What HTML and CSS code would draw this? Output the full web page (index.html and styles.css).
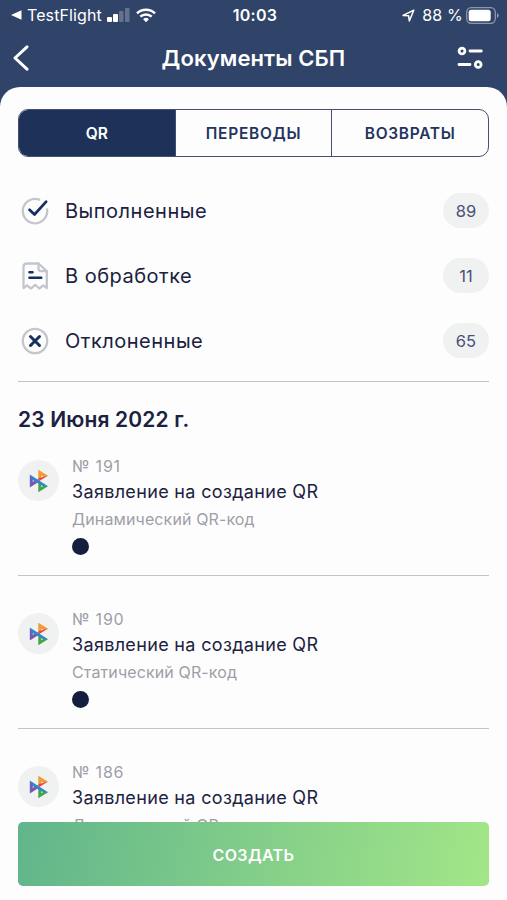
FILE: index.html
```html
<!DOCTYPE html>
<html lang="ru">
<head>
    <meta charset="UTF-8">
    <meta name="viewport" content="width=device-width, initial-scale=1.0">
    <title>Документы СБП</title>
    <link rel="stylesheet" href="styles.css">
</head>
<body>
    <!-- Logo shared by all list items -->
    <svg width="0" height="0" class="defs">
        <symbol id="sbp" viewBox="0 0 20 24">
            <path d="M9.300 .8L19 6.700l-4 1.500-2.700-1.800v5.100l-3-2z" fill="#f29a33"/>
            <path d="M19 6.700L9.300 12.400V9.200z" fill="#e2474c"/>
            <path d="M9.300 12.500v10.700L19 17.300l-4-.8-2.700 1.700v-4z" fill="#43a548"/>
            <path d="M.8 5.600v12.600l3-1.800V9.200z" fill="#6c5cbb"/>
            <path d="M.8 18.200L11 12.200 8.300 10.300 3.500 13z" fill="#7d55a8"/>
            <path d="M.8 5.600L19 17.300h-4.800L3.300 10.700z" fill="#2f86c8"/>
        </symbol>
    </svg>

    <header>
        <div class="status">
            <div class="status-left">
                <svg width="11" height="10" viewBox="0 0 11 10"><path d="M0 5L10.500 0.300v9.400z" fill="#fff"/></svg>
                <span class="carrier">TestFlight</span>
                <svg class="signal" width="23" height="14" viewBox="0 0 23 14" fill="#fff">
                    <rect x="0" y="9" width="5" height="5" rx="1"/>
                    <rect x="6" y="6" width="5" height="8" rx="1"/>
                    <rect x="12" y="3" width="4.500" height="11" rx="1" opacity=".25"/>
                    <rect x="18" y="0" width="4.500" height="14" rx="1" opacity=".25"/>
                </svg>
                <svg class="wifi" width="20" height="15" viewBox="0 0 20 15" fill="none" stroke="#fff" stroke-width="2.500">
                    <path d="M1 5.300a13 13 0 0 1 18 0"/>
                    <path d="M4.300 8.700a8.200 8.200 0 0 1 11.400 0"/>
                    <path d="M7.100 11.200a4.200 4.200 0 0 1 5.800 0L10 14.300z" fill="#fff" stroke="none"/>
                </svg>
            </div>
            <div class="time">10:03</div>
            <div class="status-right">
                <svg width="13" height="13" viewBox="0 0 13 13" fill="none" stroke="#fff" stroke-width="1.500" stroke-linejoin="round"><path d="M1 6.400L11.800 1.200L7.300 12L6.600 6.700z"/></svg>
                <span class="percent">88 %</span>
                <svg width="33" height="17" viewBox="0 0 33 17">
                    <rect x=".7" y=".7" width="28.600" height="15.600" rx="4.500" fill="none" stroke="#fff" stroke-opacity=".45" stroke-width="1.300"/>
                    <rect x="2.700" y="2.700" width="22" height="11.600" rx="2.500" fill="#fff"/>
                    <path d="M31 6v5q1.600-.8 1.600-2.500T31 6z" fill="#fff" fill-opacity=".5"/>
                </svg>
            </div>
        </div>
        <div class="nav">
            <svg width="16" height="26" viewBox="0 0 16 26" fill="none" stroke="#fff" stroke-width="3" stroke-linecap="round" stroke-linejoin="round"><path d="M14 1.800L2 13l12 11.200"/></svg>
            <h1>Документы СБП</h1>
            <svg class="settings" width="26" height="24" viewBox="0 0 26 24" fill="none" stroke="#fff" stroke-width="2.800" stroke-linecap="round">
                <circle cx="5" cy="5" r="2.900"/>
                <path d="M13 5h11.300M2 18.500h11"/>
                <circle cx="21.200" cy="18.500" r="2.900"/>
            </svg>
        </div>
    </header>

    <main>
        <div class="tabs">
            <button class="active">QR</button>
            <button>ПЕРЕВОДЫ</button>
            <button>ВОЗВРАТЫ</button>
        </div>

        <ul class="filters">
            <li>
                <svg width="28" height="28" viewBox="0 0 28 28" fill="none" stroke-width="2.300" stroke-linecap="round">
                    <path d="M18.200 2.700A12.200 12.200 0 1 0 26.100 12.500" stroke="#c3c7cc"/>
                    <path d="M8.500 12.800l5 4.700L25.200 4.700" stroke="#142f60" stroke-width="2.700" stroke-linejoin="round"/>
                </svg>
                <span>Выполненные</span>
                <b>89</b>
            </li>
            <li>
                <svg width="28" height="28" viewBox="0 0 28 28" fill="none" stroke-width="2.300" stroke-linecap="round" stroke-linejoin="round">
                    <path d="M17.500 1.500H6Q2.500 1.500 2.500 5v21l3.600-2.600L10 26.500l4.200-3.600 4.200 3.600 3.800-3.100 3.600 2.600V9.200z" stroke="#c3c7cc"/>
                    <path d="M17.500 1.500v4.700q0 3 3 3h5.300" stroke="#c3c7cc"/>
                    <path d="M8.500 10.200h3M8.500 15.700h11.700" stroke="#142f60" stroke-width="2.600"/>
                </svg>
                <span>В обработке</span>
                <b>11</b>
            </li>
            <li>
                <svg width="28" height="28" viewBox="0 0 28 28" fill="none" stroke-linecap="round">
                    <circle cx="14" cy="14" r="12.200" stroke="#c3c7cc" stroke-width="2.300"/>
                    <path d="M9.500 9.500l9 9M18.500 9.500l-9 9" stroke="#142f60" stroke-width="3"/>
                </svg>
                <span>Отклоненные</span>
                <b>65</b>
            </li>
        </ul>

        <h2>23 Июня 2022 г.</h2>

        <div class="item">
            <div class="logo"><svg width="20" height="24"><use href="#sbp"/></svg></div>
            <div class="info">
                <div class="number">№ 191</div>
                <div class="title">Заявление на создание QR</div>
                <div class="type">Динамический QR-код</div>
                <div class="dot"></div>
            </div>
        </div>
        <div class="item">
            <div class="logo"><svg width="20" height="24"><use href="#sbp"/></svg></div>
            <div class="info">
                <div class="number">№ 190</div>
                <div class="title">Заявление на создание QR</div>
                <div class="type">Статический QR-код</div>
                <div class="dot"></div>
            </div>
        </div>
        <div class="item">
            <div class="logo"><svg width="20" height="24"><use href="#sbp"/></svg></div>
            <div class="info">
                <div class="number">№ 186</div>
                <div class="title">Заявление на создание QR</div>
                <div class="type">Динамический QR-код</div>
                <div class="dot"></div>
            </div>
        </div>
    </main>

    <button class="create">СОЗДАТЬ</button>
</body>
</html>
```
FILE: styles.css
```css
* {
    box-sizing: border-box;
}

body {
    margin: 0;
    height: 900px;
    overflow: hidden;
    background: #304368;
    color: #1b2240;
    font-family: Inter, "Liberation Sans", sans-serif;
}

svg {
    display: block;
    flex: none;
}

.defs {
    position: absolute;
}

button {
    font-family: inherit;
    border: none;
    cursor: pointer;
}

header {
    height: 87px;
    color: #fff;
}

.status {
    display: grid;
    grid-template-columns: 1fr auto 1fr;
    align-items: center;
    height: 30px;
    padding: 0 8px 0 11px;
    font-size: 16px;
}

.status-left,
.status-right {
    display: flex;
    align-items: center;
}

.status-right {
    justify-content: flex-end;
}

.carrier {
    margin: 0 5px 0 5px;
    letter-spacing: 0.1px;
}

.wifi {
    margin-left: 6px;
}

.time {
    font-weight: 600;
    letter-spacing: 0.3px;
}

.percent {
    margin: 0 3px 0 7px;
    letter-spacing: 0.2px;
}

.nav {
    display: grid;
    grid-template-columns: 1fr auto 1fr;
    align-items: center;
    height: 56px;
    padding: 0 24px 0 24px;
}

.nav svg:first-child {
    margin-left: -11px;
}

.settings {
    justify-self: end;
}

h1 {
    margin: 0;
    font-size: 22px;
    font-weight: 600;
    letter-spacing: 0.1px;
}

main {
    height: 813px;
    padding: 22px 18px 0;
    background: #fdfdfe;
    border-radius: 20px 20px 0 0;
    overflow: hidden;
}

.tabs {
    display: flex;
    height: 48px;
    border: 1px solid #454d70;
    border-radius: 10px;
    overflow: hidden;
}

.tabs button {
    flex: 1;
    padding: 0;
    background: none;
    color: #25345c;
    font-size: 15.5px;
    font-weight: 600;
    letter-spacing: 0.7px;
}

.tabs button + button {
    border-left: 1px solid #454d70;
}

.tabs .active {
    background: #1e3259;
    color: #fff;
    letter-spacing: 0;
}

.filters {
    margin: 0;
    padding: 21px 0 8px;
    list-style: none;
    border-bottom: 1px solid #c2c3c6;
}

.filters li {
    display: flex;
    align-items: center;
    height: 65px;
    padding-left: 3px;
    font-size: 20px;
}

.filters span {
    flex: 1;
    margin-left: 16px;
    letter-spacing: 0.5px;
}

.filters b {
    width: 46px;
    height: 35px;
    padding-top: 1px;
    border-radius: 18px;
    background: #f0f1f1;
    color: #4a5078;
    font-size: 16.5px;
    font-weight: 400;
    line-height: 35px;
    text-align: center;
}

h2 {
    margin: 26px 0 24px;
    font-size: 21px;
    font-weight: 600;
    letter-spacing: 0.15px;
    line-height: 24px;
}

.item {
    display: flex;
    height: 120px;
    border-bottom: 1px solid #c2c3c6;
}

.item + .item {
    margin-top: 33px;
}

.logo {
    display: flex;
    align-items: center;
    justify-content: center;
    width: 41px;
    height: 41px;
    margin: 4px 13px 0 0;
    border-radius: 50%;
    background: #f0f1f1;
}

.number,
.type {
    color: #9da0a6;
    font-size: 16px;
    line-height: 20px;
}

.number {
    letter-spacing: 0.8px;
}

.type {
    letter-spacing: 0.12px;
}

.title {
    margin: 2px 0 4px;
    font-size: 18px;
    letter-spacing: 0.33px;
    line-height: 27px;
}

.dot {
    width: 17px;
    height: 17px;
    margin-top: 9px;
    border-radius: 50%;
    background: #141f40;
}

.create {
    position: fixed;
    left: 18px;
    right: 18px;
    bottom: 14px;
    height: 64px;
    padding-top: 3px;
    border-radius: 5px;
    background: linear-gradient(100deg, #61b58b, #a3e688);
    color: #fff;
    font-size: 16px;
    font-weight: 600;
    letter-spacing: 0.4px;
}
```
